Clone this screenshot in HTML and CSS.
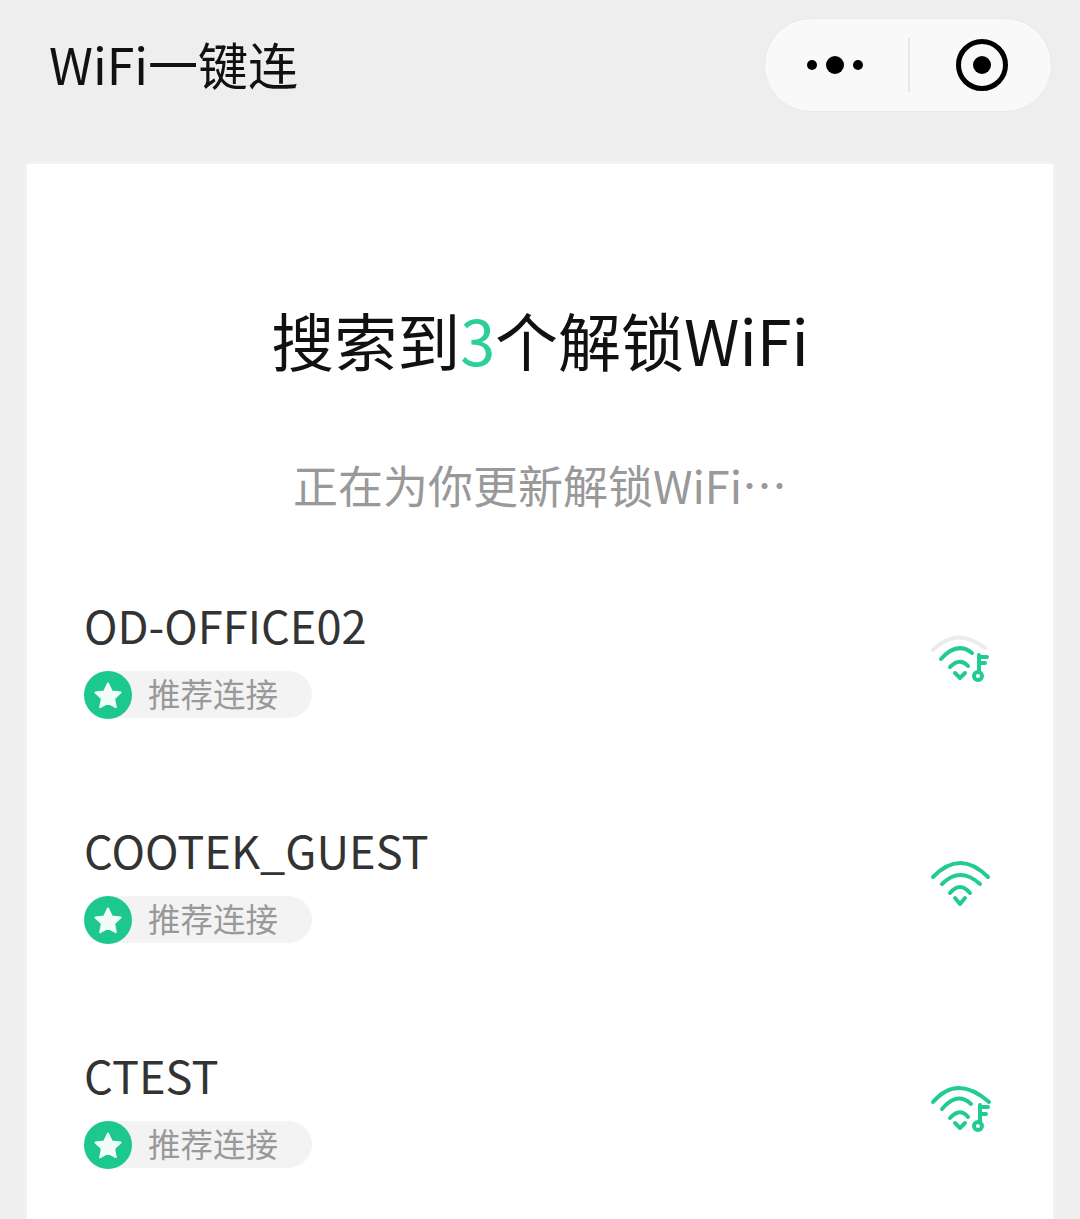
FILE: index.html
```html
<!DOCTYPE html>
<html lang="zh-CN">
<head>
  <meta charset="UTF-8" />
  <meta name="viewport" content="width=device-width, initial-scale=1" />
  <title>WiFi一键连</title>
  <link rel="stylesheet" href="styles.css">
</head>
<body>
  <!-- 顶部导航 -->
  <header class="nav">
    <h1 class="nav-title">WiFi一键连</h1>
    <div class="capsule">
      <svg class="capsule-more" viewBox="0 0 60 20" aria-hidden="true">
        <circle cx="6" cy="10" r="5" />
        <circle cx="29" cy="10" r="9" />
        <circle cx="52" cy="10" r="5" />
      </svg>
      <span class="capsule-line"></span>
      <svg class="capsule-close" viewBox="0 0 52 52" aria-hidden="true">
        <circle cx="26" cy="26" r="23.5" fill="none" stroke="#000" stroke-width="5" />
        <circle cx="26" cy="26" r="9" />
      </svg>
    </div>
  </header>

  <!-- 列表卡片 -->
  <main class="card">
    <h2 class="card-title">搜索到<em>3</em>个解锁WiFi</h2>
    <p class="card-sub">正在为你更新解锁WiFi…</p>

    <ul class="wifi-list">
      <li class="wifi-row">
        <div class="wifi-info">
          <div class="wifi-name">OD-OFFICE02</div>
          <div class="wifi-tag">
            <svg class="tag-star" viewBox="0 0 48 48" aria-hidden="true">
              <circle cx="24" cy="24" r="24" fill="#1cc88e" />
              <path d="M24 12.5l3.8 8 8.7 1.1-6.4 6 1.7 8.6-7.8-4.3-7.8 4.3 1.7-8.6-6.4-6 8.7-1.1z" fill="#f2fdfa" stroke="#f2fdfa" stroke-width="2" stroke-linejoin="round" />
            </svg>
            <span>推荐连接</span>
          </div>
        </div>
        <svg class="wifi-icon" viewBox="0 0 70 60" aria-hidden="true">
          <path class="arc-faint" d="M8 20Q32 -4 60 18" />
          <path class="arc" d="M16 29Q32 11 47 23" />
          <path class="arc" d="M25 37Q35 27 43 36" />
          <path class="arc" d="M30 43L35 48 40 43" />
          <path class="key" d="M54 41V25M54 27H62M54 33H60" />
          <circle class="key" cx="53" cy="46" r="4" />
        </svg>
      </li>

      <li class="wifi-row">
        <div class="wifi-info">
          <div class="wifi-name">COOTEK_GUEST</div>
          <div class="wifi-tag">
            <svg class="tag-star" viewBox="0 0 48 48" aria-hidden="true">
              <circle cx="24" cy="24" r="24" fill="#1cc88e" />
              <path d="M24 12.5l3.8 8 8.7 1.1-6.4 6 1.7 8.6-7.8-4.3-7.8 4.3 1.7-8.6-6.4-6 8.7-1.1z" fill="#f2fdfa" stroke="#f2fdfa" stroke-width="2" stroke-linejoin="round" />
            </svg>
            <span>推荐连接</span>
          </div>
        </div>
        <svg class="wifi-icon" viewBox="0 0 70 60" aria-hidden="true">
          <path class="arc" d="M8 22Q35 -6 63 22" />
          <path class="arc" d="M17 29Q35 11 55 29" />
          <path class="arc" d="M25 38Q35 26 45 38" />
          <path class="arc" d="M30 43L35 49 40 43" />
        </svg>
      </li>

      <li class="wifi-row">
        <div class="wifi-info">
          <div class="wifi-name">CTEST</div>
          <div class="wifi-tag">
            <svg class="tag-star" viewBox="0 0 48 48" aria-hidden="true">
              <circle cx="24" cy="24" r="24" fill="#1cc88e" />
              <path d="M24 12.5l3.8 8 8.7 1.1-6.4 6 1.7 8.6-7.8-4.3-7.8 4.3 1.7-8.6-6.4-6 8.7-1.1z" fill="#f2fdfa" stroke="#f2fdfa" stroke-width="2" stroke-linejoin="round" />
            </svg>
            <span>推荐连接</span>
          </div>
        </div>
        <svg class="wifi-icon" viewBox="0 0 70 60" aria-hidden="true">
          <path class="arc" d="M8 22Q32 -6 64 22" />
          <path class="arc" d="M17 29Q32 11 46 24" />
          <path class="arc" d="M25 38Q35 27 43 37" />
          <path class="arc" d="M30 43L35 48 40 43" />
          <path class="key" d="M55 43V25M55 27H63M55 34H61" />
          <circle class="key" cx="53" cy="46" r="4" />
        </svg>
      </li>
    </ul>
  </main>
</body>
</html>
```

FILE: styles.css
```css
/* === ZÁKLAD === */
html, body {
  height: 100%;
}

body {
  margin: 0;
  height: 1219px;
  overflow: hidden;
  background: #eeeeee;
  font-family: "Noto Sans CJK SC", "Noto Sans", sans-serif;
  display: flex;
  flex-direction: column;
}

/* === NAVIGACE === */
.nav {
  height: 164px;
  flex-shrink: 0;
  display: flex;
  justify-content: space-between;
  align-items: flex-start;
  padding: 18px 28px 0 49px;
  box-sizing: border-box;
}

.nav-title {
  margin: 0;
  padding-top: 9px;
  font-size: 50px;
  line-height: 72px;
  font-weight: 400;
  color: #111;
}

.capsule {
  width: 288px;
  height: 94px;
  box-sizing: border-box;
  background: #f9f9f9;
  border: 1px solid #e9e9e9;
  border-radius: 47px;
  display: flex;
  align-items: center;
}

.capsule-more {
  width: 60px;
  height: 20px;
  margin-left: 41px;
  fill: #000;
}

.capsule-line {
  width: 2px;
  height: 54px;
  margin-left: 42px;
  background: #e6e6e6;
}

.capsule-close {
  width: 52px;
  height: 52px;
  margin-left: 46px;
  fill: #000;
}

/* === KARTA === */
.card {
  flex: 1;
  margin: 0 27px;
  background: #fff;
  box-shadow: 0 0 6px rgba(255, 255, 255, 0.8);
  overflow: hidden;
}

.card-title {
  margin: 130px 0 0;
  text-align: center;
  font-size: 63px;
  line-height: 90px;
  font-weight: 400;
  color: #111;
}

.card-title em {
  font-style: normal;
  color: #2bcf9b;
}

.card-sub {
  margin: 69px 0 0;
  text-align: center;
  font-size: 45px;
  line-height: 64px;
  font-weight: 400;
  color: #999;
}

/* === SEZNAM WIFI === */
.wifi-list {
  list-style: none;
  margin: 75px 0 0;
  padding: 0 57px;
}

.wifi-row {
  height: 225px;
  display: flex;
  justify-content: space-between;
  align-items: flex-start;
}

.wifi-name {
  font-size: 45.2px;
  line-height: 66px;
  font-weight: 400;
  color: #333;
}

.wifi-tag {
  width: 228px;
  height: 47px;
  margin-top: 13px;
  border-radius: 24px;
  background: #f3f3f3;
  display: flex;
  align-items: center;
  font-size: 32.5px;
  line-height: 44px;
  color: #999;
}

.wifi-tag span {
  padding-bottom: 3px;
}

.tag-star {
  width: 48px;
  height: 48px;
  margin-right: 16px;
  flex-shrink: 0;
}

.wifi-icon {
  width: 70px;
  height: 60px;
  margin-top: 38px;
  margin-right: 1px;
}

.arc, .arc-faint, .key {
  fill: none;
  stroke-width: 4;
  stroke-linecap: round;
  stroke-linejoin: round;
  stroke: #22cb94;
}

.arc-faint {
  stroke: #ececec;
}
```
